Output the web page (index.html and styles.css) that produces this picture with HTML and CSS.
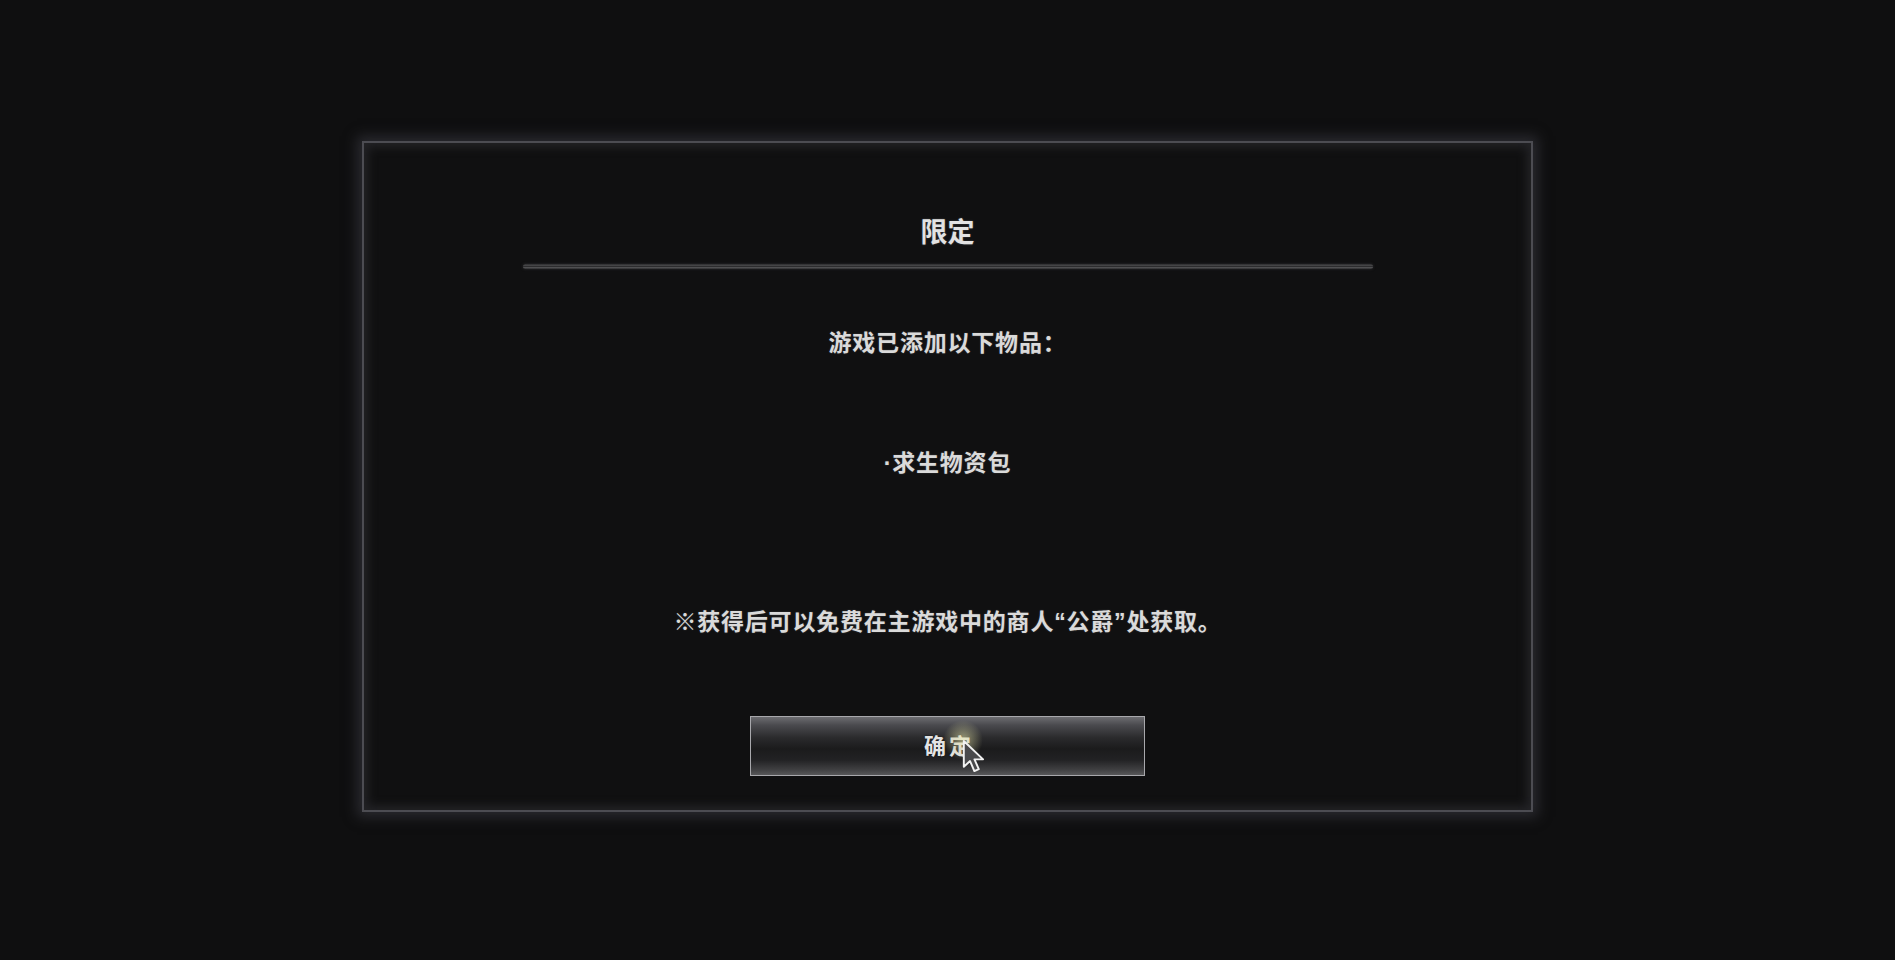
FILE: index.html
```html
<!DOCTYPE html>
<html lang="zh-CN">
<head>
<meta charset="utf-8">
<title>限定</title>
<link rel="stylesheet" href="styles.css">
</head>
<body>
<div class="screen">
  <div class="panel">
    <h1 class="title">限定</h1>
    <div class="divider"></div>
    <p class="line line-intro">游戏已添加以下物品<span class="colon">：</span></p>
    <p class="line line-item">·求生物资包</p>
    <p class="line line-note">※获得后可以免费在主游戏中的商人“公爵”处获取。</p>
    <div class="button-wrap">
      <button class="confirm">确定</button>
      <span class="cursor-glow"></span>
      <svg class="cursor" width="24" height="34" viewBox="0 0 20 28" aria-hidden="true">
        <path d="M1.5 1.5 L1.5 23 L6.7 18.2 L10.3 26.6 L14 25 L10.4 16.8 L17.6 16.8 Z" fill="#4a4a4c" stroke="#f2f2f2" stroke-width="1.6" stroke-linejoin="round"/>
      </svg>
    </div>
  </div>
</div>
</body>
</html>
```

FILE: styles.css
```css
html, body {
  margin: 0;
  padding: 0;
  background: #0f0f10;
  height: 100%;
  overflow: hidden;
}

.screen {
  display: flex;
  justify-content: center;
  padding-top: 141px;
  font-family: "Liberation Sans", "Noto Sans CJK SC", sans-serif;
  color: #dadada;
}

.panel {
  box-sizing: border-box;
  width: 1171px;
  height: 671px;
  border: 2px solid #4c4c52;
  background: #101011;
  box-shadow: 0 0 12px 5px rgba(44, 44, 50, 0.9), inset 0 0 10px 4px rgba(40, 40, 44, 0.8);
  display: flex;
  flex-direction: column;
  align-items: center;
  padding-top: 75px;
}

.title {
  margin: 0;
  font-size: 27px;
  line-height: 30px;
  font-weight: 700;
  color: #e2e2e2;
  text-shadow: 0 0 2px rgba(255, 255, 255, 0.25);
}

.divider {
  width: 850px;
  height: 5px;
  margin-top: 16px;
  background: linear-gradient(to bottom, #262628 0, #4a4a4c 25%, #2c2c2e 50%, #58585a 75%, #242426 100%);
  box-shadow: 0 0 3px rgba(70, 70, 74, 0.5);
  border-radius: 3px;
}

.line {
  margin: 0;
  font-weight: 700;
  line-height: 30px;
  font-size: 23px;
  letter-spacing: 0.8px;
  text-shadow: 0 0 2px rgba(255, 255, 255, 0.2);
}

.colon {
  font-family: "Noto Sans CJK TC", sans-serif;
}

.line-intro {
  margin-top: 57px;
}

.line-item {
  margin-top: 90px;
}

.line-note {
  margin-top: 129px;
}

.button-wrap {
  position: relative;
  margin-top: 79px;
}

.confirm {
  display: block;
  box-sizing: border-box;
  width: 395px;
  height: 60px;
  margin: 0;
  padding: 0 0 4px 0;
  border: 1px solid #a8a8ac;
  background: linear-gradient(to bottom, #6c6c70 0, #4a4a4e 14%, #2a2a2c 36%, #1b1b1c 55%, #222224 74%, #3e3e40 90%, #58585a 100%);
  color: #e4e4e4;
  font-family: "Noto Sans CJK SC", sans-serif;
  font-size: 22px;
  font-weight: 700;
  letter-spacing: 3px;
  text-indent: 3px;
  line-height: 30px;
  text-shadow: 0 0 2px rgba(0, 0, 0, 0.6);
}

.cursor-glow {
  position: absolute;
  left: 193px;
  top: 4px;
  width: 40px;
  height: 40px;
  border-radius: 50%;
  background: radial-gradient(circle, rgba(235, 235, 175, 0.6) 0, rgba(200, 200, 150, 0.35) 35%, rgba(160, 160, 120, 0) 70%);
  pointer-events: none;
}

.cursor {
  position: absolute;
  left: 212px;
  top: 23px;
  pointer-events: none;
}
```
